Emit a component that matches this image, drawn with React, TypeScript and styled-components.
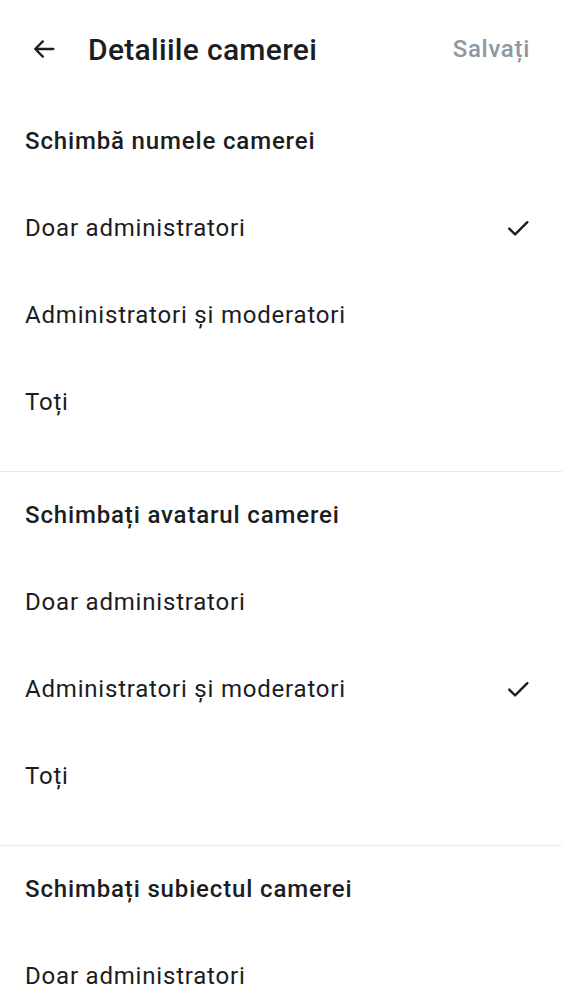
import React from "react";
import styled, { createGlobalStyle } from "styled-components";

const Global = createGlobalStyle`
  html, body { margin: 0; padding: 0; background: #ffffff; }
  body { font-family: Roboto, "Noto Sans", "Liberation Sans", sans-serif; -webkit-font-smoothing: antialiased; }
  * { box-sizing: border-box; }
`;

const Page = styled.div`
  width: 562px;
  background: #ffffff;
  color: #1b1d22;
`;

const AppBar = styled.header`
  height: 98px;
  display: flex;
  align-items: center;
  padding: 0 32px 0 28px;
`;

const BackButton = styled.button`
  width: 32px;
  height: 32px;
  padding: 0;
  margin: 0 28px 0 0;
  border: none;
  background: transparent;
  display: flex;
  align-items: center;
  justify-content: center;
  color: #1b1d22;
`;

const Title = styled.h1`
  flex: 1;
  margin: 0;
  font-size: 30px;
  font-weight: 500;
  letter-spacing: 0.3px;
`;

const SaveButton = styled.button`
  border: none;
  background: transparent;
  padding: 0;
  font-family: inherit;
  font-size: 24px;
  font-weight: 500;
  letter-spacing: 0.7px;
  color: #8d97a5;
`;

const Section = styled.section<{ $last?: boolean }>`
  padding-bottom: 26px;
  border-bottom: ${(p) => (p.$last ? "none" : "1px solid #e7eaef")};
`;

const SectionTitle = styled.h2`
  height: 86px;
  margin: 0;
  display: flex;
  align-items: center;
  padding: 0 25px;
  font-size: 24px;
  font-weight: 500;
  letter-spacing: 0.85px;
`;

const Option = styled.div`
  height: 87px;
  display: flex;
  align-items: center;
  justify-content: space-between;
  padding: 0 30px 0 25px;
  font-size: 24px;
  font-weight: 400;
  letter-spacing: 0.8px;
`;

const Check = () => (
  <svg width="28" height="28" viewBox="0 0 24 24" fill="none">
    <path d="M4.5 12.5 L9.5 17.5 L20 7" stroke="#1b1d22" strokeWidth="2" strokeLinecap="round" strokeLinejoin="round" />
  </svg>
);

const Arrow = () => (
  <svg width="28" height="28" viewBox="0 0 24 24" fill="none">
    <path d="M20 12 H4.5 M11 5.5 L4.5 12 L11 18.5" stroke="#1b1d22" strokeWidth="2" strokeLinecap="round" strokeLinejoin="round" />
  </svg>
);

type Sec = { title: string; selected: number };
const options = ["Doar administratori", "Administratori și moderatori", "Toți"];
const sections: Sec[] = [
  { title: "Schimbă numele camerei", selected: 0 },
  { title: "Schimbați avatarul camerei", selected: 1 },
  { title: "Schimbați subiectul camerei", selected: -1 },
];

export default function App() {
  return (
    <Page>
      <Global />
      <AppBar>
        <BackButton aria-label="Înapoi"><Arrow /></BackButton>
        <Title>Detaliile camerei</Title>
        <SaveButton>Salvați</SaveButton>
      </AppBar>
      {sections.map((s, i) => (
        <Section key={s.title} $last={i === sections.length - 1}>
          <SectionTitle>{s.title}</SectionTitle>
          {options.map((o, j) => (
            <Option key={o}>
              <span>{o}</span>
              {s.selected === j && <Check />}
            </Option>
          ))}
        </Section>
      ))}
    </Page>
  );
}
